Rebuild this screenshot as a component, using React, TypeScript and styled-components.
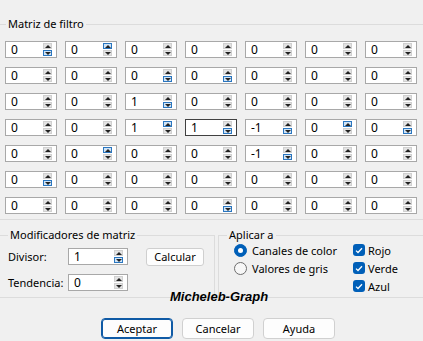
import React from "react";
import styled, { createGlobalStyle } from "styled-components";

const GlobalStyle = createGlobalStyle`
  body {
    margin: 0;
    background: #f0f0f0;
    font-family: "Noto Sans", "Open Sans", sans-serif;
    font-size: 11px;
    color: #000;
    overflow: hidden;
  }
`;

type Hl = "up" | "down" | undefined;

const matrix = [
  [0, 0, 0, 0, 0, 0, 0],
  [0, 0, 0, 0, 0, 0, 0],
  [0, 0, 1, 0, 0, 0, 0],
  [0, 0, 1, 1, -1, 0, 0],
  [0, 0, 0, 0, -1, 0, 0],
  [0, 0, 0, 0, 0, 0, 0],
  [0, 0, 0, 0, 0, 0, 0],
];

// spinner halves that show the blue hover frame in the capture
const highlights: Record<string, Hl> = {
  "0-0": "down",
  "0-1": "up",
  "1-2": "down",
  "1-3": "down",
  "2-2": "down",
  "3-2": "up",
  "3-3": "down",
  "3-4": "down",
  "3-5": "up",
  "3-6": "down",
  "4-1": "up",
  "4-4": "down",
  "5-0": "down",
  "6-3": "down",
};

const Dialog = styled.div`
  position: relative;
  width: 423px;
  height: 341px;
  padding-top: 24px;
  box-sizing: border-box;
`;

const Group = styled.div<{ $left?: boolean; $right?: boolean; $width?: number }>`
  position: relative;
  box-sizing: border-box;
  border-top: 1px solid #dcdcdc;
  border-bottom: 1px solid #dcdcdc;
  border-left: ${(p) => (p.$left ? "1px solid #dcdcdc" : "none")};
  border-right: ${(p) => (p.$right ? "1px solid #dcdcdc" : "none")};
  width: ${(p) => (p.$width ? `${p.$width}px` : "auto")};
  flex: ${(p) => (p.$width ? "none" : "1")};
`;

const Caption = styled.span<{ $left: number }>`
  position: absolute;
  top: -9px;
  left: ${(p) => p.$left}px;
  padding: 0 2px;
  line-height: 16px;
  background: #f0f0f0;
`;

const MatrixGrid = styled.div`
  display: grid;
  grid-template-columns: repeat(7, 52px);
  grid-auto-rows: 17px;
  column-gap: 8px;
  row-gap: 9px;
  padding: 16px 0 5px 5px;
`;

const SpinBox = styled.div<{ $width: number; $focused?: boolean }>`
  display: flex;
  align-items: center;
  justify-content: space-between;
  width: ${(p) => p.$width}px;
  height: 17px;
  box-sizing: border-box;
  padding: 0 4px 0 5px;
  background: #fff;
  border: 1px solid ${(p) => (p.$focused ? "#404040" : "#a8a8a8")};
`;

const Value = styled.span`
  font-size: 12px;
  line-height: 15px;
`;

const Spinner = styled.div`
  display: flex;
  flex-direction: column;
  width: 9px;
  height: 13px;
  gap: 1px;
`;

const SpinHalf = styled.div<{ $active?: boolean }>`
  flex: 1;
  display: flex;
  align-items: center;
  justify-content: center;
  box-sizing: border-box;
  background: ${(p) => (p.$active ? "#cfe4f7" : "#e3e3e3")};
  border: 1px solid ${(p) => (p.$active ? "#2a76c0" : "#d0d0d0")};
`;

const Arrow = styled.span<{ $dir: "up" | "down" }>`
  width: 0;
  height: 0;
  border-left: 3px solid transparent;
  border-right: 3px solid transparent;
  ${(p) =>
    p.$dir === "up"
      ? "border-bottom: 3px solid #222;"
      : "border-top: 3px solid #222;"}
`;

const BottomRow = styled.div`
  display: flex;
  gap: 3px;
  margin-top: 15px;
  height: 63px;
`;

const ModifierBody = styled.div`
  display: flex;
  flex-direction: column;
  gap: 9px;
  padding: 12px 0 0 8px;
`;

const FormRow = styled.div`
  display: flex;
  align-items: center;
  height: 17px;
`;

const FieldLabel = styled.span`
  width: 60px;
`;

const SmallButton = styled.button`
  margin-left: 18px;
  width: 58px;
  height: 18px;
  padding: 0;
  font: inherit;
  background: #fdfdfd;
  border: 1px solid #cfcfcf;
  border-radius: 3px;
`;

const OptionColumns = styled.div`
  display: flex;
  padding: 5px 0 0 15px;
`;

const OptionColumn = styled.div<{ $width?: number }>`
  display: flex;
  flex-direction: column;
  width: ${(p) => (p.$width ? `${p.$width}px` : "auto")};
`;

const Option = styled.label<{ $gap: number }>`
  display: flex;
  align-items: center;
  gap: ${(p) => p.$gap}px;
  height: 18px;
`;

const Radio = styled.span<{ $checked?: boolean }>`
  display: flex;
  align-items: center;
  justify-content: center;
  width: 13px;
  height: 13px;
  box-sizing: border-box;
  border-radius: 50%;
  background: ${(p) => (p.$checked ? "#005fb8" : "#f7f7f7")};
  border: 1px solid ${(p) => (p.$checked ? "#005fb8" : "#6e6e6e")};

  &::after {
    content: "";
    display: ${(p) => (p.$checked ? "block" : "none")};
    width: 5px;
    height: 5px;
    border-radius: 50%;
    background: #fff;
  }
`;

const CheckBox = styled.span`
  display: flex;
  align-items: center;
  justify-content: center;
  width: 12px;
  height: 12px;
  border-radius: 3px;
  background: #005fb8;
`;

const Watermark = styled.div`
  position: absolute;
  left: 170px;
  top: 289px;
  font-family: "Liberation Sans", Arial, sans-serif;
  font-size: 13px;
  font-weight: bold;
  font-style: italic;
  line-height: 16px;
`;

const ButtonRow = styled.div`
  display: flex;
  gap: 9px;
  padding-left: 101px;
  margin-top: 20px;
`;

const DialogButton = styled.button<{ $primary?: boolean }>`
  width: 72px;
  height: 21px;
  padding: 0;
  font: inherit;
  background: #fdfdfd;
  border: 1px solid ${(p) => (p.$primary ? "#0f5aa5" : "#d0d0d0")};
  box-shadow: ${(p) => (p.$primary ? "inset 0 0 0 1px #0f5aa5" : "none")};
  border-radius: 4px;
`;

function Spin({ value, width = 52, hl, focused }: { value: number; width?: number; hl?: Hl; focused?: boolean }) {
  return (
    <SpinBox $width={width} $focused={focused}>
      <Value>{value}</Value>
      <Spinner>
        <SpinHalf $active={hl === "up"}>
          <Arrow $dir="up" />
        </SpinHalf>
        <SpinHalf $active={hl === "down"}>
          <Arrow $dir="down" />
        </SpinHalf>
      </Spinner>
    </SpinBox>
  );
}

function Check() {
  return (
    <CheckBox>
      <svg width="8" height="7" viewBox="0 0 8 7">
        <path d="M1 3.6 L3 5.5 L7 1.2" fill="none" stroke="#fff" strokeWidth="1.3" />
      </svg>
    </CheckBox>
  );
}

export default function App() {
  return (
    <>
      <GlobalStyle />
      <Dialog>
        <Group>
          <Caption $left={6}>Matriz de filtro</Caption>
          <MatrixGrid>
            {matrix.map((row, r) =>
              row.map((v, c) => (
                <Spin key={`${r}-${c}`} value={v} hl={highlights[`${r}-${c}`]} focused={r === 3 && c === 3} />
              ))
            )}
          </MatrixGrid>
        </Group>

        <BottomRow>
          <Group $right $width={215}>
            <Caption $left={8}>Modificadores de matriz</Caption>
            <ModifierBody>
              <FormRow>
                <FieldLabel>Divisor:</FieldLabel>
                <Spin value={1} width={60} hl="down" />
                <SmallButton>Calcular</SmallButton>
              </FormRow>
              <FormRow>
                <FieldLabel>Tendencia:</FieldLabel>
                <Spin value={0} width={60} />
              </FormRow>
            </ModifierBody>
          </Group>

          <Group $left>
            <Caption $left={8}>Aplicar a</Caption>
            <OptionColumns>
              <OptionColumn $width={119}>
                <Option $gap={5}>
                  <Radio $checked />
                  Canales de color
                </Option>
                <Option $gap={5}>
                  <Radio />
                  Valores de gris
                </Option>
              </OptionColumn>
              <OptionColumn>
                <Option $gap={3}>
                  <Check />
                  Rojo
                </Option>
                <Option $gap={3}>
                  <Check />
                  Verde
                </Option>
                <Option $gap={3}>
                  <Check />
                  Azul
                </Option>
              </OptionColumn>
            </OptionColumns>
          </Group>
        </BottomRow>

        <Watermark>Micheleb-Graph</Watermark>

        <ButtonRow>
          <DialogButton $primary>Aceptar</DialogButton>
          <DialogButton>Cancelar</DialogButton>
          <DialogButton>Ayuda</DialogButton>
        </ButtonRow>
      </Dialog>
    </>
  );
}
